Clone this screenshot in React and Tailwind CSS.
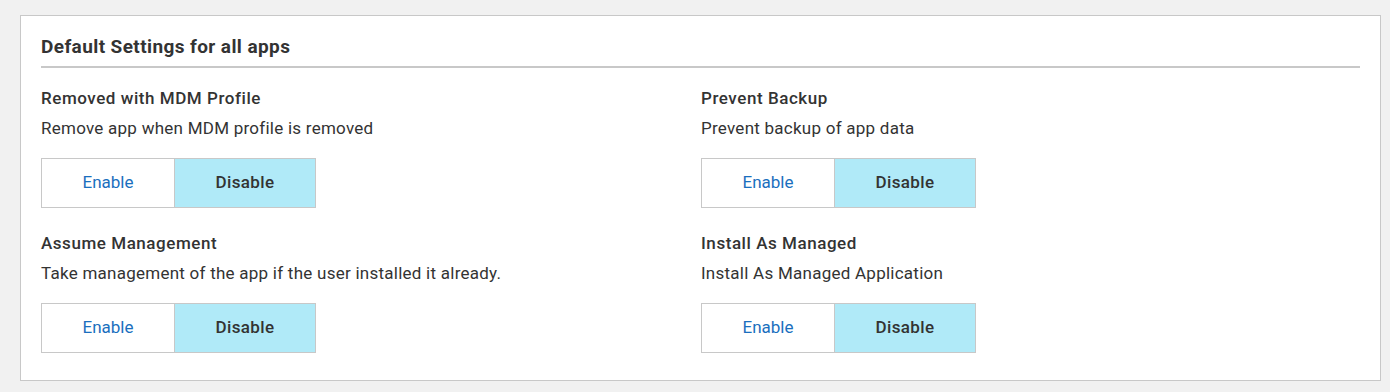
import { useState } from "react";

const settings = [
  {
    id: "removeWithProfile",
    title: "Removed with MDM Profile",
    detail: "Remove app when MDM profile is removed",
  },
  {
    id: "preventBackup",
    title: "Prevent Backup",
    detail: "Prevent backup of app data",
  },
  {
    id: "assumeManagement",
    title: "Assume Management",
    detail: "Take management of the app if the user installed it already.",
  },
  {
    id: "installAsManaged",
    title: "Install As Managed",
    detail: "Install As Managed Application",
  },
];

const Toggle = ({ value, onChange }) => (
  <div className="flex mt-[18px]">
    <button
      onClick={() => onChange(true)}
      className={`w-[134px] h-[50px] border border-[#c8c8c8] text-[17px] ${
        value ? "bg-[#b0eaf8] text-[#333] font-medium tracking-[0.4px]" : "bg-white text-[#1a6fbe]"
      }`}
    >
      Enable
    </button>
    <button
      onClick={() => onChange(false)}
      className={`w-[141px] h-[50px] border border-l-0 border-[#c8c8c8] text-[17px] ${
        !value ? "bg-[#b0eaf8] text-[#333] font-medium tracking-[0.4px]" : "bg-white text-[#1a6fbe]"
      }`}
    >
      Disable
    </button>
  </div>
);

const App = () => {
  const [values, setValues] = useState({
    removeWithProfile: false,
    preventBackup: false,
    assumeManagement: false,
    installAsManaged: false,
  });

  return (
    <div className="min-h-[392px] bg-[#f1f1f1] pt-[15px] pl-[20px] font-['Roboto',sans-serif] text-[#333]">
      <div className="w-[1361px] bg-white border border-[#c8c8c8] px-5 pt-[19px] pb-[27px]">
        <h2 className="text-[19px] leading-[24px] font-bold tracking-[0.4px]">Default Settings for all apps</h2>
        <div className="h-[2px] bg-[#c8c8c8] mt-[7px]" />

        <div className="grid grid-cols-[660px_1fr] gap-y-[23px] mt-[18px]">
          {settings.map((s) => (
            <div key={s.id}>
              <div className="text-[17px] leading-[24px] font-medium tracking-[0.55px]">{s.title}</div>
              <div className="text-[17px] leading-[24px] tracking-[0.25px] mt-[6px]">{s.detail}</div>
              <Toggle
                value={values[s.id]}
                onChange={(v) => setValues((prev) => ({ ...prev, [s.id]: v }))}
              />
            </div>
          ))}
        </div>
      </div>
    </div>
  );
};

export default App;
